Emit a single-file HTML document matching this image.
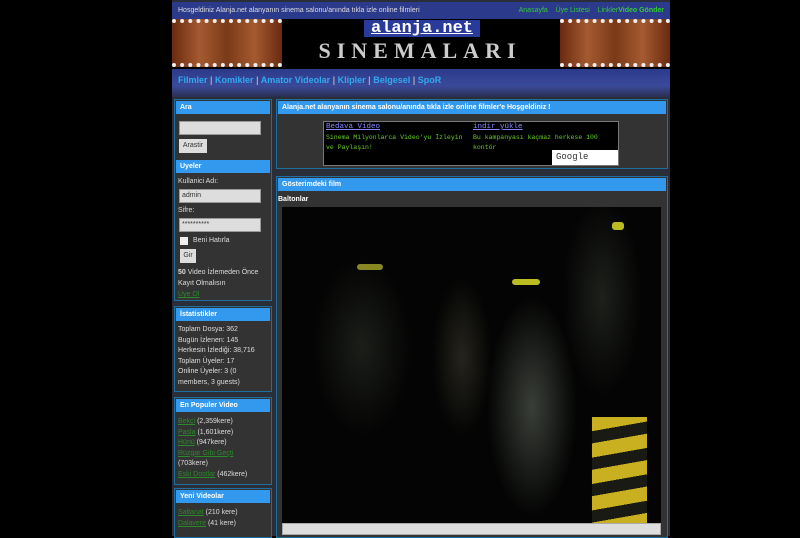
<!DOCTYPE html>
<html><head><meta charset="utf-8"><style>
*{margin:0;padding:0;box-sizing:border-box}
body{width:800px;height:536px;background:#000;font-family:"Liberation Sans",sans-serif;font-size:7px;color:#ddd;overflow:hidden;position:relative}
.a{position:absolute}
.hd{background:#3399ee;color:#fff;font-weight:bold;font-size:7px;height:13px;line-height:13px;padding-left:4px}
.box{position:absolute;background:#333;border:1px solid #1d6f9f}
.g{color:#2a8a2a;text-decoration:underline}
.in{background:#ddd;border:1px solid #999;height:13px;color:#333;padding-left:2px;line-height:11px}
</style></head><body>
<div class="a" style="left:172px;top:0;width:498px;height:536px;background:#2a2e38"></div>
<div class="a" style="left:172px;top:2px;width:498px;height:17px;background:#2c3a8c;color:#ddd;line-height:17px;padding-left:6px;font-size:7px">Hosgeldiniz Alanja.net alanyanın sinema salonu/anında tıkla izle online filmleri
<span class="a" style="right:6px;top:0;color:#3c3">Anasayfa &nbsp;&nbsp; Üye Listesi &nbsp;&nbsp; Linkler<b>Video Gönder</b></span></div>
<div class="a" style="left:172px;top:19px;width:498px;height:50px;background:#000"></div>
<div class="a" style="left:172px;top:19px;width:110px;height:48px;background:linear-gradient(90deg,#6a2a10,#a55a30,#7a3a18,#a55a30,#6a2a10);border-top:4px dotted #eee;border-bottom:4px dotted #eee"></div>
<div class="a" style="left:560px;top:19px;width:110px;height:48px;background:linear-gradient(90deg,#6a2a10,#a55a30,#7a3a18,#a55a30,#6a2a10);border-top:4px dotted #eee;border-bottom:4px dotted #eee"></div>
<div class="a" style="left:364px;top:20px;width:116px;height:17px;background:#2a3a9a;color:#fff;font:bold 17px 'Liberation Mono',monospace;text-align:center;line-height:17px;text-decoration:underline">alanja.net</div>
<div class="a" style="left:305px;top:38px;width:230px;height:26px;color:#ccc;font:bold 22px 'Liberation Serif',serif;letter-spacing:6px;text-align:center;line-height:26px">SINEMALARI</div>
<div class="a" style="left:172px;top:69px;width:498px;height:28px;background:linear-gradient(180deg,#2c3a8c,#3a4a9a 60%,#2a2e50);color:#33aaee;font-weight:bold;font-size:9px;line-height:22px;padding-left:6px">Filmler <span style="color:#aaa">|</span> Komikler <span style="color:#aaa">|</span> Amator Videolar <span style="color:#aaa">|</span> Klipler <span style="color:#aaa">|</span> Belgesel <span style="color:#aaa">|</span> SpoR</div>
<div class="box" style="left:174px;top:99px;width:98px;height:202px">
<div class="hd" style="margin:1px">Ara</div>
<div class="in a" style="left:4px;top:21px;width:82px;height:14px"></div>
<div class="a" style="left:4px;top:39px;width:28px;height:14px;background:#ddd;color:#333;text-align:center;line-height:14px">Arastir</div>
<div class="hd a" style="left:1px;top:60px;width:94px">Uyeler</div>
<div class="a" style="left:3px;top:78px">Kullanici Adı:</div>
<div class="in a" style="left:4px;top:89px;width:82px;height:14px">admin</div>
<div class="a" style="left:3px;top:107px">Sifre:</div>
<div class="in a" style="left:4px;top:118px;width:82px;height:14px">**********</div>
<div class="a" style="left:5px;top:137px;width:8px;height:8px;background:#eee"></div>
<div class="a" style="left:18px;top:137px">Beni Hatırla</div>
<div class="a" style="left:5px;top:149px;width:16px;height:14px;background:#ddd;color:#333;text-align:center;line-height:14px">Gir</div>
<div class="a" style="left:3px;top:167px;line-height:11px"><b>50</b> Video İzlemeden Önce<br>Kayıt Olmalısın<br><span class="g">Üye Ol</span></div>
</div>
<div class="box" style="left:174px;top:306px;width:98px;height:86px">
<div class="hd" style="margin:1px">İstatistikler</div>
<div style="padding:3px 3px;line-height:10.5px">Toplam Dosya: 362<br>Bugün İzlenen: 145<br>Herkesin İzlediği: 38,716<br>Toplam Üyeler: 17<br>Online Üyeler: 3 (0 members, 3 guests)</div>
</div>
<div class="box" style="left:174px;top:397px;width:98px;height:88px">
<div class="hd" style="margin:1px">En Populer Video</div>
<div style="padding:4px 3px;line-height:10.5px"><span class="g">Bekçi</span> (2,359kere)<br><span class="g">Pasla</span> (1,601kere)<br><span class="g">Hünü</span> (947kere)<br><span class="g">Rüzgar Gibi Geçti</span><br>(703kere)<br><span class="g">Eski Dostlar</span> (462kere)</div>
</div>
<div class="box" style="left:174px;top:488px;width:98px;height:50px">
<div class="hd" style="margin:1px">Yeni Videolar</div>
<div style="padding:4px 3px;line-height:10.5px"><span class="g">Saltanat</span> (210 kere)<br><span class="g">Dalavere</span> (41 kere)</div>
</div>
<div class="box" style="left:276px;top:99px;width:392px;height:70px">
<div class="hd" style="margin:1px">Alanja.net alanyanın sinema salonu/anında tıkla izle online filmler'e Hoşgeldiniz !</div>
<div class="a" style="left:46px;top:21px;width:296px;height:45px;background:#000;border:1px solid #777;color:#6c2;font-size:6.5px;font-family:'Liberation Mono',monospace">
<div class="a" style="left:2px;top:1px;color:#88f;text-decoration:underline;font-size:7.5px">Bedava Video</div>
<div class="a" style="left:2px;top:11px;width:140px;line-height:10px">Sinema Milyonlarca Video'yu İzleyin ve Paylaşın!</div>
<div class="a" style="left:149px;top:1px;color:#88f;text-decoration:underline;font-size:7.5px">indir yükle</div>
<div class="a" style="left:149px;top:11px;width:140px;line-height:10px">Bu kampanyası kaçmaz herkese 100 kontör</div>
<div class="a" style="right:0;bottom:0;width:66px;height:15px;background:#fff;color:#333;font-size:9px;line-height:15px;padding-left:4px">Google <span style="font-size:5px">Reklamları</span></div>
</div></div>
<div class="box" style="left:276px;top:176px;width:392px;height:362px">
<div class="hd" style="margin:1px">Gösterimdeki film</div>
<div class="a" style="left:1px;top:19px;color:#fff;font-weight:bold">Baltonlar</div>
<div class="a" style="left:5px;top:30px;width:379px;height:316px;background:radial-gradient(ellipse 45px 110px at 250px 200px,#3a3e38,transparent),radial-gradient(ellipse 50px 90px at 80px 140px,#1c1e1a,transparent),radial-gradient(ellipse 40px 100px at 320px 90px,#1e201c,transparent),radial-gradient(ellipse 30px 80px at 180px 150px,#26241e,transparent),#030403;overflow:hidden">
<div class="a" style="left:230px;top:72px;width:28px;height:6px;background:#bb2;border-radius:3px"></div>
<div class="a" style="left:75px;top:57px;width:26px;height:6px;background:#882;border-radius:3px"></div>
<div class="a" style="left:330px;top:15px;width:12px;height:8px;background:#bb2;border-radius:3px"></div>
<div class="a" style="left:310px;top:210px;width:55px;height:110px;background:repeating-linear-gradient(170deg,#c8b020 0 14px,#1a1a14 14px 26px)"></div>
</div>
<div class="a" style="left:5px;top:346px;width:379px;height:12px;background:#ddd;border:1px solid #aaa"></div>
</div>
</body></html>
